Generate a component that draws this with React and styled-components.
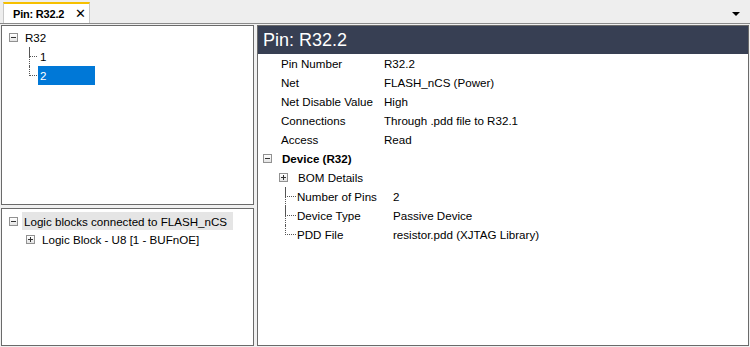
import React from "react";
import styled, { createGlobalStyle } from "styled-components";

const GlobalStyle = createGlobalStyle`
  html, body {
    margin: 0;
    padding: 0;
    background: #f0f0f0;
  }
  body {
    font-family: "Liberation Sans", Arial, sans-serif;
    font-size: 11.6px;
    color: #000;
  }
`;

const Window = styled.div`
  width: 750px;
  height: 347px;
  display: flex;
  flex-direction: column;
  background: #f0f0f0;
  overflow: hidden;
`;

const TabStrip = styled.div`
  height: 23px;
  display: flex;
  align-items: flex-end;
  padding-left: 3px;
  background: #eeeeee;
  border-bottom: 1px solid #8a8a8a;
  position: relative;
`;

const Tab = styled.div`
  width: 87px;
  height: 21px;
  box-sizing: border-box;
  display: flex;
  align-items: center;
  padding-left: 9px;
  background: #fff;
  border-top: 2px solid #f6c000;
  border-left: 1px solid #c8c8c8;
  border-right: 1px solid #c8c8c8;
  font-size: 11px;
  font-weight: bold;
  letter-spacing: -0.2px;
  white-space: nowrap;
`;

const Close = styled.span`
  margin-left: 11px;
  font-weight: normal;
  font-size: 13px;
  line-height: 1;
`;

const MenuArrow = styled.div`
  position: absolute;
  right: 10px;
  top: 12px;
  width: 0;
  height: 0;
  border-left: 4px solid transparent;
  border-right: 4px solid transparent;
  border-top: 4px solid #000;
`;

const Body = styled.div`
  flex: 1;
  display: flex;
  gap: 3px;
  padding: 1px;
`;

const LeftColumn = styled.div`
  width: 253px;
  display: flex;
  flex-direction: column;
  gap: 3px;
`;

const Panel = styled.div`
  box-sizing: border-box;
  background: #fff;
  border: 1px solid #6a6a6a;
  flex: ${(p) => p.$flex || "1"};
  height: ${(p) => p.$height || "auto"};
  padding-top: ${(p) => p.$pad || 0}px;
`;

const RightPanel = styled(Panel)`
  flex: 1;
`;

const Header = styled.div`
  height: 28px;
  background: #373f53;
  color: #fff;
  font-size: 18px;
  display: flex;
  align-items: center;
  padding-left: 5px;
`;

const TreeRow = styled.div`
  height: ${(p) => p.$h || 19}px;
  display: flex;
  align-items: center;
  position: relative;
  padding-left: ${(p) => p.$indent || 0}px;
  white-space: nowrap;
`;

const Toggle = styled.span`
  width: 9px;
  height: 9px;
  box-sizing: border-box;
  border: 1px solid #919191;
  background: linear-gradient(#ffffff, #e4e4e4);
  position: relative;
  margin-right: ${(p) => p.$gap || 8}px;
  flex-shrink: 0;
  &::before {
    content: "";
    position: absolute;
    left: 1px;
    top: 3px;
    width: 5px;
    height: 1px;
    background: #333;
  }
  &::after {
    content: "";
    display: ${(p) => (p.$open ? "none" : "block")};
    position: absolute;
    left: 3px;
    top: 1px;
    width: 1px;
    height: 5px;
    background: #333;
  }
`;

const Label = styled.span`
  padding: 1px 2px;
  background: ${(p) => (p.$selected ? "#0078d7" : p.$hover ? "#e5e5e5" : "transparent")};
  color: ${(p) => (p.$selected ? "#fff" : "#000")};
  font-weight: ${(p) => (p.$bold ? "bold" : "normal")};
  width: ${(p) => (p.$w ? p.$w + "px" : "auto")};
  height: ${(p) => (p.$fill ? "100%" : "auto")};
  display: flex;
  align-items: center;
  box-sizing: border-box;
`;

const Branch = styled.span`
  width: ${(p) => p.$w || 9}px;
  height: 50%;
  align-self: flex-start;
  border-left: 1px dotted #555;
  border-bottom: 1px dotted #555;
  box-sizing: border-box;
  margin-right: 1px;
  flex-shrink: 0;
`;

const Line = styled.span`
  position: absolute;
  left: ${(p) => p.$x}px;
  top: 0;
  bottom: 0;
  border-left: 1px dotted #555;
`;

const PropRow = styled.div`
  height: 19px;
  display: grid;
  grid-template-columns: ${(p) => p.$col || 103}px 1fr;
  align-items: center;
  padding-left: ${(p) => p.$indent || 23}px;
  white-space: nowrap;
`;

const SubRow = styled.div`
  height: 19px;
  display: flex;
  align-items: center;
  position: relative;
  padding-left: 27px;
  white-space: nowrap;
`;

const SubKey = styled.span`
  width: 96px;
`;

const props = [
  ["Pin Number", "R32.2"],
  ["Net", "FLASH_nCS (Power)"],
  ["Net Disable Value", "High"],
  ["Connections", "Through .pdd file to R32.1"],
  ["Access", "Read"],
];

const device = [
  ["Number of Pins", "2"],
  ["Device Type", "Passive Device"],
  ["PDD File", "resistor.pdd (XJTAG Library)"],
];

export default function App() {
  return (
    <Window>
      <GlobalStyle />
      <TabStrip>
        <Tab>
          Pin: R32.2
          <Close>✕</Close>
        </Tab>
        <MenuArrow />
      </TabStrip>
      <Body>
        <LeftColumn>
          <Panel $height="180px" $flex="none" $pad={2}>
            <TreeRow $indent={7}>
              <Toggle $open $gap={5} />
              <Label>R32</Label>
            </TreeRow>
            <TreeRow $indent={27}>
              <Line $x={27} />
              <Branch $w={8} />
              <Label>1</Label>
            </TreeRow>
            <TreeRow $indent={27}>
              <Branch $w={8} />
              <Label $selected $w={57} $fill>
                2
              </Label>
            </TreeRow>
          </Panel>
          <Panel $pad={3}>
            <TreeRow $h={18} $indent={7}>
              <Toggle $open $gap={4} />
              <Label $hover $w={211} $fill>
                Logic blocks connected to FLASH_nCS
              </Label>
            </TreeRow>
            <TreeRow $h={18} $indent={24}>
              <Toggle $gap={5} />
              <Label>Logic Block - U8 [1 - BUFnOE]</Label>
            </TreeRow>
          </Panel>
        </LeftColumn>
        <RightPanel>
          <Header>Pin: R32.2</Header>
          {props.map(([k, v]) => (
            <PropRow key={k}>
              <span>{k}</span>
              <span>{v}</span>
            </PropRow>
          ))}
          <TreeRow $indent={5}>
            <Toggle $open $gap={8} />
            <Label $bold>Device (R32)</Label>
          </TreeRow>
          <TreeRow $indent={21}>
            <Toggle $gap={10} />
            <span>BOM Details</span>
          </TreeRow>
          {device.map(([k, v], i) => (
            <SubRow key={k}>
              {i < device.length - 1 && <Line $x={27} />}
              <Branch $w={11} />
              <SubKey>{k}</SubKey>
              <span>{v}</span>
            </SubRow>
          ))}
        </RightPanel>
      </Body>
    </Window>
  );
}
